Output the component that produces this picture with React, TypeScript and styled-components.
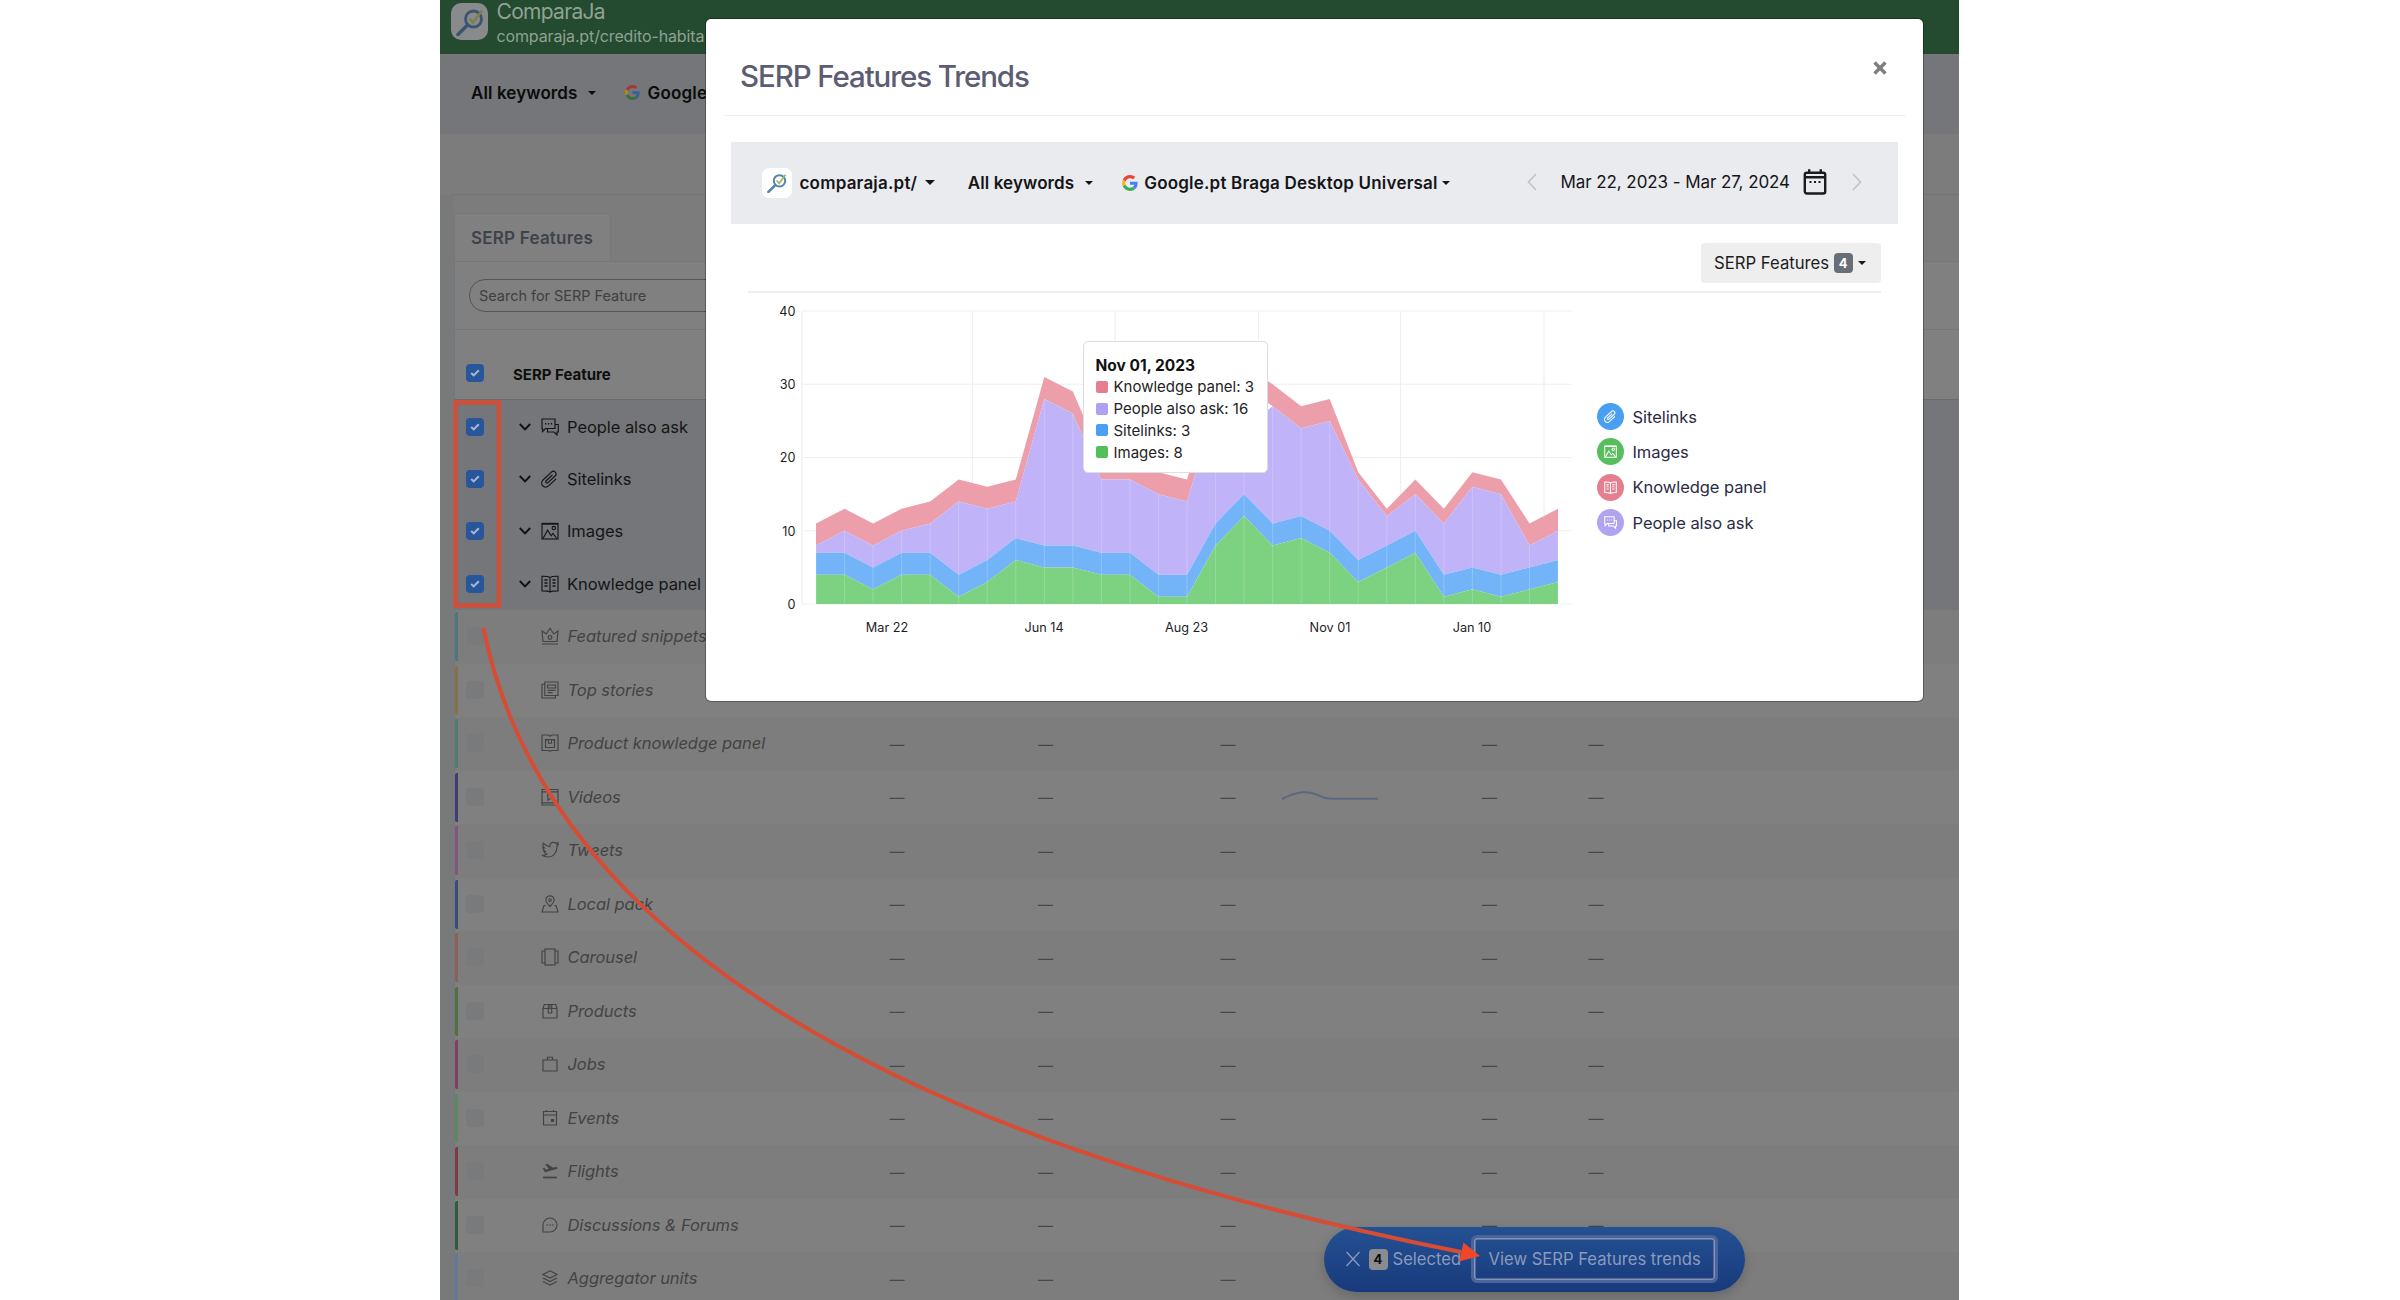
import React from "react";
import styled, { createGlobalStyle, css } from "styled-components";

const GlobalStyle = createGlobalStyle`
  *, *::before, *::after { box-sizing: border-box; }
  body { margin: 0; background: #fff; font-family: Inter, "Open Sans", sans-serif; }
`;

/* ---------- page shell ---------- */

const Page = styled.div`
  width: 2400px;
  height: 1300px;
  overflow: hidden;
  background: #fff;
`;

const Screen = styled.div`
  position: relative;
  width: 1519px;
  height: 1300px;
  margin-left: 440px;
  overflow: hidden;
  background: #7c7c7c;
`;

const SiteHeader = styled.header`
  display: flex;
  gap: 8.5px;
  height: 54px;
  padding: 3px 0 0 11px;
  background: #244a30;
`;

const SiteNames = styled.div`
  display: flex;
  flex-direction: column;
  color: #8fa295;
`;

const SiteName = styled.div`
  height: 21px;
  margin-top: -3px;
  padding-top: 1px;
  font-size: 21px;
  line-height: 21px;
  letter-spacing: -0.7px;
`;

const SiteUrl = styled.div`
  margin-top: 5px;
  font-size: 16px;
  line-height: 20px;
  letter-spacing: -0.13px;
`;

const FilterBar = styled.div`
  display: flex;
  align-items: center;
  height: 80px;
  padding: 0 0 3px 31px;
  background: #747679;
  color: #0b0b0c;
`;

const SubHeader = styled.div`
  height: 61px;
  margin-left: 12px;
  border-bottom: 1px solid #747474;
`;

const FilterLabel = styled.span<{ $ls?: number }>`
  font-size: 17px;
  font-weight: 600;
  line-height: 22px;
  white-space: nowrap;
  letter-spacing: ${(p) => p.$ls ?? 0.2}px;
`;

const Caret = styled.i<{ $size?: number; $gap: number }>`
  width: 0;
  height: 0;
  margin-left: ${(p) => p.$gap}px;
  border: ${(p) => p.$size ?? 4.5}px solid transparent;
  border-top-color: currentColor;
  border-bottom-width: 0;
`;

/* ---------- features panel ---------- */

const Panel = styled.section`
  display: flex;
  flex-direction: column;
  padding: 18px 0 0 14px;
  background: linear-gradient(to right, #77797b 14px, #7c7c7c 14px);
`;

const Tab = styled.div`
  display: flex;
  align-items: center;
  width: 157px;
  height: 49px;
  padding: 0 0 1px 16px;
  border: 1px solid #777;
  border-bottom: 0;
  border-radius: 4px 4px 0 0;
  background: #808080;
  color: #3d434b;
`;

const PanelBody = styled.div`
  background: #808080;
  border-left: 1px solid #74777a;
  border-top: 1px solid #777;
  margin-top: -1px;
`;

const SearchStrip = styled.div`
  height: 68px;
  padding: 17px 0 0 14px;
  border-bottom: 1px solid #74777a;
`;

const SearchBox = styled.div`
  display: flex;
  align-items: center;
  width: 320px;
  height: 33px;
  padding: 0 0 1px 9px;
  border: 1px solid #555;
  border-radius: 16px;
  color: #3f3f3f;
  font-size: 14.5px;
  letter-spacing: -0.03px;
`;

const HeadRow = styled.div`
  display: flex;
  align-items: center;
  height: 70px;
  padding: 20px 0 0 11px;
  gap: 29px;
  border-bottom: 1px solid #686a6c;
  color: #0f0f0f;
  font-size: 15px;
  font-weight: 700;
`;

const Box = styled.span<{ $on?: boolean }>`
  display: flex;
  align-items: center;
  justify-content: center;
  flex: none;
  width: 18px;
  height: 18px;
  border-radius: 4px;
  background: ${(p) => (p.$on ? "#28569b" : "#787a7c")};
`;

const HeadBox = styled(Box)`
  margin-top: -4px;
`;

const PickedGroup = styled.div`
  display: flex;
  flex-direction: column;
  height: 210px;
  padding-top: 1px;
  background: #747679;
`;

const rowText = css`
  font-size: 16.5px;
  line-height: 22px;
  letter-spacing: -0.06px;
  white-space: nowrap;
`;

const PickedRow = styled.div`
  display: flex;
  align-items: center;
  height: 52.2px;
  padding-left: 11px;
  color: #141516;
  ${rowText}

  > svg:nth-of-type(1) { margin-left: 35px; }
  > svg:nth-of-type(2) { margin: 0 8px 0 10px; }
`;

const IdleRow = styled.div<{ $dark: boolean }>`
  display: grid;
  grid-template-columns: 368px 148px 149px 61px 94px 109px 55px 101px 112px;
  align-items: center;
  height: 53.5px;
  background: ${(p) => (p.$dark ? "#7d7d7d" : "#808080")};
  color: #434343;
  font-style: italic;
  ${rowText}
`;

const NameCell = styled.div<{ $tone: string }>`
  display: flex;
  align-items: center;
  gap: 9px;
  height: 49px;
  border-left: 3.5px solid ${(p) => p.$tone};
  border-radius: 2px;
  padding: 0 0 1px 7.5px;

  > svg { margin-left: 48px; flex: none; }
`;

const Dash = styled.div<{ $col: number }>`
  grid-column: ${(p) => p.$col};
  padding-top: 2px;
  text-align: center;
  font-style: normal;
  font-size: 15px;
  color: #484848;
`;

const Spark = styled.svg`
  grid-column: 6;
  justify-self: center;
`;

/* ---------- selection bar ---------- */

const SelectionBar = styled.div`
  position: absolute;
  left: 883.5px;
  top: 1226.5px;
  display: flex;
  align-items: center;
  width: 421px;
  height: 65.5px;
  padding-left: 22px;
  border-radius: 33px;
  background: linear-gradient(#245193, #183a7c);
  box-shadow: 0 4px 12px rgba(0, 0, 0, 0.18);
  color: #8a9bbd;
  font-size: 16.6px;
  letter-spacing: 0;
`;

const CountChip = styled.span`
  display: flex;
  align-items: center;
  justify-content: center;
  width: 19px;
  height: 21px;
  margin: 0 5px 0 9px;
  border-radius: 4px;
  background: #8a8c90;
  color: #0c0c0c;
  font-size: 13px;
  font-weight: 700;
`;

const TrendsButton = styled.button`
  display: flex;
  align-items: center;
  justify-content: center;
  width: 247px;
  height: 48px;
  margin: 0 0 1px 10px;
  padding: 1px 0 0;
  border: 3px solid #4b659b;
  border-radius: 6px;
  box-shadow: inset 0 0 0 1.5px #8595b8;
  background: transparent;
  color: inherit;
  font: inherit;
  letter-spacing: 0;
`;

/* ---------- modal ---------- */

const Modal = styled.div`
  position: absolute;
  left: 266px;
  top: 19px;
  width: 1216.5px;
  height: 682px;
  border-radius: 5px;
  background: #fff;
  box-shadow: 0 0 0 1px rgba(0, 0, 0, 0.3);
`;

const ModalHead = styled.div`
  display: flex;
  justify-content: space-between;
  height: 97px;
  margin: 0 17px;
  padding: 38px 19px 0 17px;
  border-bottom: 1.5px solid #f1f1f2;
`;

const ModalTitle = styled.h1`
  margin: 0;
  color: #5c5d72;
  font-size: 29.5px;
  font-weight: 500;
  line-height: 38px;
  letter-spacing: -1.1px;
`;

const ModalFilters = styled.div`
  display: flex;
  align-items: center;
  height: 82px;
  margin: 26px 24.5px 0;
  padding: 0 0 1px 31px;
  background: #eaebef;
  color: #151517;
`;

const Favicon = styled.span<{ $size: number; $bg: string; $r: number }>`
  display: flex;
  align-items: center;
  justify-content: center;
  flex: none;
  width: ${(p) => p.$size}px;
  height: ${(p) => p.$size}px;
  border-radius: ${(p) => p.$r}px;
  background: ${(p) => p.$bg};
`;

const Gap = styled.span<{ $w: number }>`
  flex: none;
  width: ${(p) => p.$w}px;
`;

const DateRange = styled.div`
  display: flex;
  align-items: center;
  margin-left: auto;
  padding: 0 36px 1px 0;
  color: #151517;
  font-size: 17px;
  letter-spacing: -0.08px;
  white-space: nowrap;
`;

const Actions = styled.div`
  display: flex;
  justify-content: flex-end;
  height: 69px;
  margin: 0 42px 0;
  padding-top: 19px;
  border-bottom: 2px solid #eeeeef;
`;

const FeatureSelect = styled.button`
  display: flex;
  align-items: center;
  width: 180px;
  height: 40px;
  padding: 0 0 0 13.5px;
  border: 0;
  border-radius: 4px;
  background: #eeeeef;
  color: #1c1c1e;
  font: 400 16.7px Inter, sans-serif;
`;

const FeatureCount = styled.span`
  display: flex;
  align-items: center;
  justify-content: center;
  width: 19px;
  height: 20px;
  margin-left: 4.5px;
  border-radius: 4px;
  background: #696e76;
  color: #fff;
  font-size: 13px;
  font-weight: 700;
`;

const ChartArea = styled.div`
  position: relative;
  display: flex;
  padding-left: 50px;
`;

const AxisText = styled.text`
  fill: #1e1e1e;
  font: 400 12.7px Inter, sans-serif;
`;

const Legend = styled.ul`
  display: flex;
  flex-direction: column;
  gap: 8.4px;
  margin: 110px 0 0 10.5px;
  padding: 0;
  list-style: none;
`;

const LegendItem = styled.li`
  display: flex;
  align-items: center;
  gap: 9px;
  height: 27px;
  color: #2b2b45;
  ${rowText}
`;

const LegendDot = styled.span<{ $c: string }>`
  display: flex;
  align-items: center;
  justify-content: center;
  width: 27px;
  height: 27px;
  border-radius: 50%;
  background: ${(p) => p.$c};
  color: #fff;
`;

const Tooltip = styled.div`
  position: absolute;
  left: 376.5px;
  top: 48px;
  width: 185px;
  height: 132px;
  padding: 13px 0 0 12px;
  border: 1.5px solid #dedee2;
  border-radius: 5px;
  background: #fff;
  color: #232325;
  font-size: 15px;
`;

const TooltipTitle = styled.div`
  height: 21px;
  font-size: 15.5px;
  font-weight: 700;
  line-height: 21px;
  color: #111;
`;

const TooltipRow = styled.div`
  display: flex;
  align-items: center;
  gap: 6px;
  height: 21.8px;
  white-space: nowrap;
`;

const Swatch = styled.i<{ $c: string }>`
  width: 12px;
  height: 12px;
  border-radius: 2px;
  background: ${(p) => p.$c};
`;

const Annotation = styled.svg`
  position: absolute;
  left: 0;
  top: 0;
  pointer-events: none;
`;

/* ---------- icons ---------- */

type IconProps = { name: string; size?: number; sw?: number };

const shapes: Record<string, React.ReactNode> = {
  ask: (
    <>
      <path d="M1 1h13v9.500H4.500L1.500 13.500V10.500H1z" />
      <path d="M4 5.700h1.300M6.900 5.700h1.300M9.800 5.700h1.300" strokeWidth="1.400" />
      <path d="M14 6.500H17.300V14H16v3l-3-3H6.500V10.500" />
    </>
  ),
  link: (
    <path
      transform="rotate(-43 9 9)"
      d="M13.500 7.700H5a1.300 1.300 0 0 0 0 2.600h9.800a2.700 2.700 0 0 0 0-5.400H3.200a4.100 4.100 0 0 0 0 8.200H13.500"
    />
  ),
  image: (
    <>
      <rect x="1" y="1.500" width="16" height="15.500" />
      <path d="M1 1.800h16" strokeWidth="1.800" />
      <path d="M2 16.500l4.600-8.300 3.600 5.600 1.800-2.400 3.800 5.100" />
      <circle cx="12.800" cy="6" r="1.700" />
    </>
  ),
  book: (
    <>
      <path d="M9 2.500C7.500 1.500 5.500 1.200 1 1.300v14.500c4.500 0 6.500.2 8 1.200 1.500-1 3.500-1.200 8-1.200V1.300C12.500 1.200 10.500 1.500 9 2.500zM9 2.500V17" />
      <path d="M3.500 5h3M3.500 8h3M3.500 11h3M11.500 5h3M11.500 8h3M11.500 11h3" strokeWidth="1.500" />
    </>
  ),
  crown: (
    <>
      <path d="M1 17h16M2 14.500L1 4l4.300 3L9 1.300 12.700 7 17 4l-1 10.500z" />
      <circle cx="9" cy="10.500" r="1.900" />
    </>
  ),
  news: (
    <>
      <path d="M3.800 1h13.200v13.500H3.800z" />
      <path d="M3.800 3.200H1V17h13.400v-2.500" />
      <path d="M6.500 4h8v3h-8zM6.500 9.300h8M6.500 11.600h5" />
    </>
  ),
  product: (
    <>
      <path d="M9 2.300L7.500 1H1v15.500h6.500L9 17.300l1.500-.8H17V1h-6.500z" />
      <path d="M4.500 5.500h9v8h-9zM7.500 5.500v3.700h3V5.500M4.500 7.200l1.500-1.700M13.500 7.200L12 5.500" />
    </>
  ),
  video: (
    <>
      <path d="M1 1.500h16v15.500H1zM1 3.800h16M1 14.800h16" />
      <path d="M6.800 6.200v6l5-3z" />
    </>
  ),
  bird: (
    <path d="M1 14.300c2 .3 3.600-.2 4.800-1.300-1.700-.4-2.600-1.300-3-2.600h1.300C2.500 9.400 1.700 8 1.800 6.300l1.400.5C1.900 5.300 1.600 3.700 2.400 2.200 4.300 4.400 6.400 5.500 8.900 5.700c-.4-2.600 1.200-4.400 3.400-4.400 1.100 0 2 .4 2.700 1.100l2-.7-.9 1.900 1.200-.2-1.300 1.700C16.200 11 12.800 16 7.200 16c-2.600 0-4.600-.6-6.200-1.700z" />
  ),
  pin: (
    <>
      <path d="M9 11.500C6 8.300 4.800 6.700 4.800 5a4.200 4.200 0 0 1 8.400 0c0 1.700-1.200 3.300-4.200 6.500z" />
      <circle cx="9" cy="5" r="1.300" />
      <path d="M4.800 10.500H3L1 17h16l-2-6.500h-1.800" />
    </>
  ),
  carousel: (
    <>
      <rect x="4" y="1" width="10" height="16" />
      <path d="M4 3H1v12h3M14 3h3v12h-3" />
    </>
  ),
  box: (
    <path d="M2 6.500V16h14V6.500zM2 6.500l1.300-4h11.400l1.300 4M7.300 2.500V11h3.400V2.500M9 2.500V6.500" />
  ),
  bag: <path d="M2 5h14v11H2zM6.500 5V2.200h5V5" />,
  event: (
    <>
      <path d="M2.500 2.500h13V16h-13zM2.500 6h13M5.500 1v1.500M12.500 1v1.500" />
      <path d="M10.500 10.500h2v2h-2z" fill="currentColor" />
    </>
  ),
  flight: (
    <>
      <path d="M2 15.500h14" strokeWidth="1.700" />
      <path d="M2 6.500l1.300-.3 1.800 1.600 3-.8L4.700 2.600l1.700-.4L12 6l3-.8c1.500-.4 1.700 1.200.4 1.600L4.200 10z" fill="currentColor" strokeWidth=".5" />
    </>
  ),
  forum: (
    <>
      <path d="M2 16V9a7 7 0 1 1 7 7z" />
      <path d="M5.700 9h.9M8.600 9h.9M11.500 9h.9" strokeWidth="1.900" />
    </>
  ),
  layers: (
    <path d="M9 1.800l7 3.600-7 3.600-7-3.600zM2 9l7 3.600L16 9M2 12.400l7 3.600 7-3.600" />
  ),
};

const Icon = ({ name, size = 18, sw = 1.15 }: IconProps) => (
  <svg width={size} height={size} viewBox="0 0 18 18" fill="none" stroke="currentColor" strokeWidth={sw}>
    {shapes[name]}
  </svg>
);

const Tick = () => (
  <svg width="10" height="8" viewBox="0 0 10 8" fill="none" stroke="#a9b7d0" strokeWidth="2.100">
    <path d="M1.200 4l2.500 2.400L8.800 1.300" />
  </svg>
);

const Chevron = () => (
  <svg width="12" height="8" viewBox="0 0 12 8" fill="none" stroke="#111" strokeWidth="1.900">
    <path d="M.8 1l5.200 5.300L11.200 1" />
  </svg>
);

const Magnifier = ({ size, ring, mark }: { size: number; ring: string; mark: string }) => (
  <svg width={size} height={size} viewBox="0 0 28 28" fill="none">
    <circle cx="17.500" cy="11" r="8" stroke={ring} strokeWidth="2.800" />
    <path d="M11.500 17L2 26.500" stroke={ring} strokeWidth="3.600" strokeLinecap="round" />
    <path d="M13.500 10.500l3.500 4L26 2.500" stroke={mark} strokeWidth="2.400" />
  </svg>
);

const GoogleG = ({ size, dim }: { size: number; dim?: boolean }) => {
  const c = dim ? ["#a5382f", "#a68a26", "#35743f", "#37609f"] : ["#e8453c", "#f3b72b", "#3faa58", "#4a80ee"];
  return (
    <svg width={size} height={size} viewBox="0 0 48 48">
      <path fill={c[0]} d="M24 9.500c3.540 0 6.710 1.220 9.210 3.600l6.850-6.850C35.900 2.380 30.470 0 24 0 14.620 0 6.510 5.380 2.560 13.220l7.980 6.190C12.430 13.720 17.740 9.500 24 9.500z" />
      <path fill={c[3]} d="M46.980 24.550c0-1.570-.15-3.090-.38-4.550H24v9.020h12.940c-.58 2.960-2.260 5.480-4.780 7.180l7.730 6c4.510-4.180 7.090-10.360 7.090-17.650z" />
      <path fill={c[1]} d="M10.530 28.590c-.48-1.450-.76-2.990-.76-4.590s.27-3.140.76-4.590l-7.980-6.190C.92 16.460 0 20.120 0 24c0 3.880.92 7.540 2.560 10.780l7.970-6.190z" />
      <path fill={c[2]} d="M24 48c6.480 0 11.930-2.130 15.890-5.810l-7.730-6c-2.150 1.450-4.920 2.300-8.160 2.300-6.260 0-11.570-4.220-13.470-9.910l-7.980 6.190C6.510 42.620 14.620 48 24 48z" />
    </svg>
  );
};

const Arrow = ({ flip }: { flip?: boolean }) => (
  <svg width="10" height="18" viewBox="0 0 10 18" fill="none" stroke="#c3c4c8" strokeWidth="1.700">
    <path d={flip ? "M1 1l7.500 8L1 17" : "M9 1L1.500 9 9 17"} />
  </svg>
);

const CalendarIcon = () => (
  <svg width="24" height="26" viewBox="0 0 24 26" fill="none" stroke="#1b1b1d" strokeWidth="2.400">
    <rect x="1.800" y="3.700" width="20.400" height="20.800" rx="2" />
    <path d="M2 8.300h20M6.200 .2v4M17.800 .2v4" />
    <path d="M6.500 13h2M11 13h2M15.500 13h2" strokeWidth="2" />
  </svg>
);

/* ---------- data ---------- */

const picked = [
  ["ask", "People also ask"],
  ["link", "Sitelinks"],
  ["image", "Images"],
  ["book", "Knowledge panel"],
];

const idle = [
  ["crown", "Featured snippets", "#49797a"],
  ["news", "Top stories", "#857345"],
  ["product", "Product knowledge panel", "#4d7f70"],
  ["video", "Videos", "#433a78"],
  ["bird", "Tweets", "#84567f"],
  ["pin", "Local pack", "#3a4b80"],
  ["carousel", "Carousel", "#8c605a"],
  ["box", "Products", "#52703c"],
  ["bag", "Jobs", "#803f62"],
  ["event", "Events", "#5a8a5e"],
  ["flight", "Flights", "#7f3b45"],
  ["forum", "Discussions & Forums", "#2f5b41"],
  ["layers", "Aggregator units", "#60789c"],
];

const images = [4, 4, 2, 4, 4, 1, 3, 6, 5, 5, 4, 4, 1, 1, 8, 12, 8, 9, 7, 3, 5, 7, 1, 2, 1, 2, 3];
const links = images.map((v) => v + 3);
const asks = [8, 10, 8, 10, 11, 14, 13, 14, 28, 26, 17, 17, 15, 14, 27, 24, 27, 24, 25, 17, 12, 15, 11, 16, 15, 8, 10];
const panels = [11, 13, 11, 13, 14, 17, 16, 17, 31, 29, 20, 20, 18, 17, 30, 32.5, 30, 27, 28, 18, 13, 17, 13, 18, 17, 11, 13];
const panelsBase = asks.map((v, i) => (i === 15 ? 29.7 : v));

const px = (i: number) => 60 + i * 28.54;
const py = (v: number) => 311.500 - v * 7.325;

const band = (top: number[], base: number[]) =>
  "M" +
  top.map((v, i) => `${px(i)} ${py(v)}`).join("L") +
  "L" +
  base.map((v, i) => `${px(i)} ${py(v)}`).reverse().join("L") +
  "Z";

const xTicks: [string, number][] = [
  ["Mar 22", 131], ["Jun 14", 288], ["Aug 23", 430.500], ["Nov 01", 574], ["Jan 10", 716],
];

const legend = [
  ["link", "Sitelinks", "#4a9ff3"],
  ["image", "Images", "#58be5b"],
  ["book", "Knowledge panel", "#e57f8f"],
  ["ask", "People also ask", "#b2a2f2"],
];

const tips = [
  ["Knowledge panel: 3", "#e57f8f"],
  ["People also ask: 16", "#b0a0f2"],
  ["Sitelinks: 3", "#4a9ff3"],
  ["Images: 8", "#53bf59"],
];

const zero = images.map(() => 0);

/* Plot origin: svg left edge sits at the y-axis labels. */
const Chart = () => (
  <svg width="830" height="360" viewBox="0 0.500 830 360">
    <g stroke="#efeff0" strokeWidth="1.200">
      {[0, 10, 20, 30, 40].map((v) => (
        <path key={v} d={`M46 ${py(v)}H816`} />
      ))}
      {[46, 216.500, 359, 502.500, 644.500, 788].map((x) => (
        <path key={x} d={`M${x} ${py(40)}V${py(0)}`} />
      ))}
    </g>
    <path d={band(panels, panelsBase)} fill="#ec9fab" />
    <path d={band(asks, links)} fill="#c0b3f8" />
    <path d={band(links, images)} fill="#73b4f8" />
    <path d={band(images, zero)} fill="#7cd280" />
    <g stroke="#fff" strokeOpacity=".2">
      {links.map((v, i) => (
        <path key={i} d={`M${px(i)} ${py(asks[i])}V${py(0)}`} />
      ))}
    </g>
    {[0, 10, 20, 30, 40].map((v) => (
      <AxisText key={v} x="39.500" y={py(v) + 4.800} textAnchor="end">
        {v}
      </AxisText>
    ))}
    {xTicks.map(([t, x]) => (
      <AxisText key={t} x={x} y="339" textAnchor="middle">
        {t}
      </AxisText>
    ))}
  </svg>
);

export default function App() {
  return (
    <Page>
      <GlobalStyle />
      <Screen>
        <SiteHeader>
          <Favicon $size={37} $bg="#898a8c" $r={10}>
            <Magnifier size={28} ring="#3d5471" mark="#7d8043" />
          </Favicon>
          <SiteNames>
            <SiteName>ComparaJa</SiteName>
            <SiteUrl>comparaja.pt/credito-habita</SiteUrl>
          </SiteNames>
        </SiteHeader>

        <FilterBar>
          <FilterLabel $ls={0.1}>All keywords</FilterLabel>
          <Caret $gap={10.5} />
          <Gap $w={29.5} />
          <GoogleG size={15} dim />
          <Gap $w={7} />
          <FilterLabel>Google</FilterLabel>
        </FilterBar>

        <SubHeader />

        <Panel>
          <Tab>
            <FilterLabel $ls={0.22}>SERP Features</FilterLabel>
          </Tab>
          <PanelBody>
            <SearchStrip>
              <SearchBox>Search for SERP Feature</SearchBox>
            </SearchStrip>
            <HeadRow>
              <HeadBox $on>
                <Tick />
              </HeadBox>
              SERP Feature
            </HeadRow>
            <PickedGroup>
              {picked.map(([icon, label]) => (
                <PickedRow key={label}>
                  <Box $on>
                    <Tick />
                  </Box>
                  <Chevron />
                  <Icon name={icon} />
                  {label}
                </PickedRow>
              ))}
            </PickedGroup>
            {idle.map(([icon, label, tone], i) => (
              <IdleRow key={label} $dark={i % 2 === 0}>
                <NameCell $tone={tone}>
                  <Box />
                  <Icon name={icon} />
                  {label}
                </NameCell>
                {i > 1 && [2, 3, 5].map((c) => (
                  <Dash key={c} $col={c}>—</Dash>
                ))}
                {label === "Videos" && (
                  <Spark width="98" height="12" viewBox="0 0 98 12" fill="none" stroke="#5b6880" strokeWidth="2">
                    <path d="M1 8C17 0 27-1 39 5c5 2.500 7 2.800 11 2.800H97" />
                  </Spark>
                )}
                {i > 1 && i < 12 && [8, 9].map((c) => (
                  <Dash key={c} $col={c}>—</Dash>
                ))}
              </IdleRow>
            ))}
          </PanelBody>
        </Panel>

        <SelectionBar>
          <svg width="14" height="16" viewBox="0 0 14 16" stroke="#8a9bbd" strokeWidth="1.300">
            <path d="M.5 1l13 14M13.500 1L.5 15" />
          </svg>
          <CountChip>4</CountChip>
          Selected
          <TrendsButton>View SERP Features trends</TrendsButton>
        </SelectionBar>

        <Modal>
          <ModalHead>
            <ModalTitle>SERP Features Trends</ModalTitle>
            <svg width="14" height="22" viewBox="0 0 14 22" stroke="#7f7f7f" strokeWidth="3.400">
              <path d="M1.500 5.500l11 11M12.500 5.500l-11 11" />
            </svg>
          </ModalHead>

          <ModalFilters>
            <Favicon $size={30} $bg="#fff" $r={7}>
              <Magnifier size={20} ring="#5584ab" mark="#9bb95c" />
            </Favicon>
            <Gap $w={8} />
            <FilterLabel>comparaja.pt/</FilterLabel>
            <Caret $gap={8} $size={5} />
            <Gap $w={32.5} />
            <FilterLabel $ls={0.1}>All keywords</FilterLabel>
            <Caret $gap={10.5} $size={4} />
            <Gap $w={29} />
            <GoogleG size={16} />
            <Gap $w={6.5} />
            <FilterLabel>Google.pt Braga Desktop Universal</FilterLabel>
            <Caret $gap={4} $size={4} />
            <DateRange>
              <Arrow />
              <Gap $w={24} />
              Mar 22, 2023 - Mar 27, 2024
              <Gap $w={13} />
              <CalendarIcon />
              <Gap $w={25} />
              <Arrow flip />
            </DateRange>
          </ModalFilters>

          <Actions>
            <FeatureSelect>
              SERP Features
              <FeatureCount>4</FeatureCount>
              <Caret $gap={5} $size={4} />
            </FeatureSelect>
          </Actions>

          <ChartArea>
            <Chart />
            <Tooltip>
              <TooltipTitle>Nov 01, 2023</TooltipTitle>
              {tips.map(([t, c]) => (
                <TooltipRow key={t}>
                  <Swatch $c={c} />
                  {t}
                </TooltipRow>
              ))}
            </Tooltip>
            <Legend>
              {legend.map(([icon, t, c]) => (
                <LegendItem key={t}>
                  <LegendDot $c={c}>
                    <Icon name={icon} size={13} sw={1.4} />
                  </LegendDot>
                  {t}
                </LegendItem>
              ))}
            </Legend>
          </ChartArea>
        </Modal>

        <Annotation width="1519" height="1300" viewBox="440 0 1519 1300" fill="none">
          <rect x="455.500" y="402.500" width="43.500" height="203" stroke="#d14f38" strokeWidth="4.500" />
          <path d="M483.500 628Q573 1074.600 1461 1252" stroke="#d64c34" strokeWidth="4" />
          <path d="M1463.500 1242.500L1480 1256L1459 1261.500Z" fill="#ee4729" />
        </Annotation>
      </Screen>
    </Page>
  );
}
